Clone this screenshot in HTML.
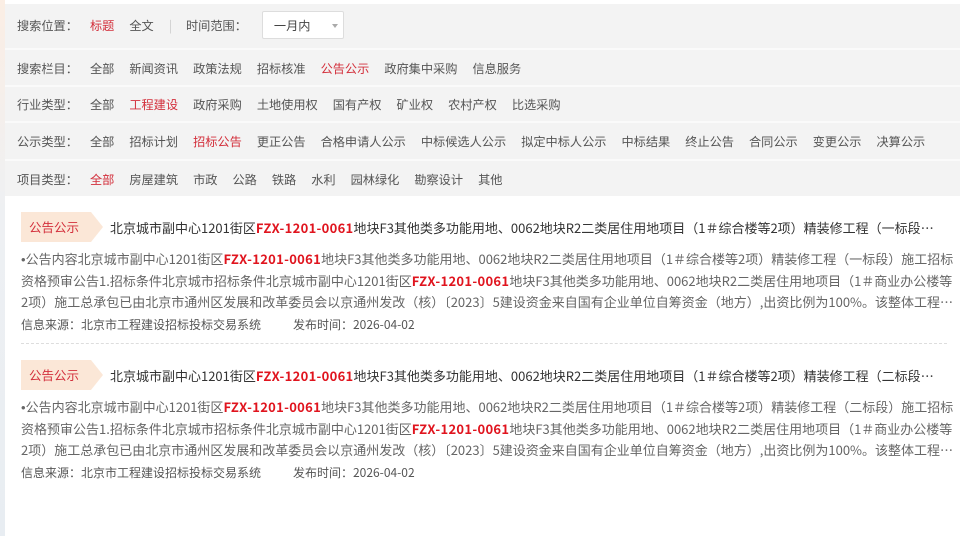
<!DOCTYPE html>
<html><head><meta charset="utf-8"><style>
*{margin:0;padding:0;box-sizing:border-box}
body{width:960px;height:536px;overflow:hidden;background:#fff;font-family:"Noto Sans CJK SC","Liberation Sans",sans-serif;position:relative}
.strip{position:absolute;left:0;top:0;width:5px;height:536px;background:linear-gradient(#fbeee4,#eef0f3 40%,#e8edf2)}
.filter{position:absolute;left:5px;top:4px;width:955px;background:#f3f3f3}
.row{position:relative;border-bottom:2px solid #fafafa;font-size:12.2px;color:#555;display:flex;align-items:center;padding-left:12px}
.row span{margin-right:15px;white-space:nowrap}
.row .lab{margin-right:12px}
.red{color:#d3303c}
.sel{width:82px;height:28px;background:#fff;border:1px solid #ddd;border-radius:2px;position:relative;padding-left:11px;line-height:26px;color:#444}
.sel:after{content:"";position:absolute;right:5px;top:12px;border:3px solid transparent;border-top:4px solid #aaa}
.item{position:absolute;left:21px;width:926px}
.tag{position:absolute;left:0;top:0;width:82px;height:30px;background:#fbe7d7;clip-path:polygon(0 0,70px 0,82px 15px,70px 30px,0 30px);color:#d3303c;font-size:12.5px;line-height:30px;padding-left:8px}
.title{position:absolute;left:89px;top:6px;width:830px;font-size:13px;color:#333;white-space:nowrap;overflow:hidden;text-overflow:ellipsis;line-height:20px}
.body{position:absolute;left:0;top:36px;width:934px;font-size:13px;color:#666;line-height:21px;height:63px;overflow:hidden;display:-webkit-box;-webkit-line-clamp:3;-webkit-box-orient:vertical}
.bu{font-family:"Liberation Sans",sans-serif}
b{color:#e0141e;font-weight:bold;letter-spacing:0.3px}
.meta{position:absolute;left:0;top:104px;font-size:12px;color:#555;white-space:nowrap;line-height:17px}
.dash{position:absolute;left:0;top:131px;width:926px;border-top:1px dashed #ddd}
</style></head><body>
<div class="strip"></div>
<div class="filter">
<div class="row" style="height:46px;padding-bottom:3px"><span class="lab">搜索位置：</span><span class="red">标题</span><span>全文</span><span style="color:#ccc;margin-right:14px">|</span><span>时间范围：</span><div class="sel">一月内</div></div>
<div class="row" style="height:37px"><span class="lab">搜索栏目：</span><span>全部</span><span>新闻资讯</span><span>政策法规</span><span>招标核准</span><span class="red">公告公示</span><span>政府集中采购</span><span>信息服务</span></div>
<div class="row" style="height:36px"><span class="lab">行业类型：</span><span>全部</span><span class="red">工程建设</span><span>政府采购</span><span>土地使用权</span><span>国有产权</span><span>矿业权</span><span>农村产权</span><span>比选采购</span></div>
<div class="row" style="height:38px"><span class="lab">公示类型：</span><span>全部</span><span>招标计划</span><span class="red">招标公告</span><span>更正公告</span><span>合格申请人公示</span><span>中标候选人公示</span><span>拟定中标人公示</span><span>中标结果</span><span>终止公告</span><span>合同公示</span><span>变更公示</span><span>决算公示</span></div>
<div class="row" style="height:35px;border-bottom:none"><span class="lab">项目类型：</span><span class="red">全部</span><span>房屋建筑</span><span>市政</span><span>公路</span><span>铁路</span><span>水利</span><span>园林绿化</span><span>勘察设计</span><span>其他</span></div>
</div>

<div class="item" style="top:212px">
<div class="tag">公告公示</div>
<div class="title">北京城市副中心1201街区<b>FZX-1201-0061</b>地块F3其他类多功能用地、0062地块R2二类居住用地项目（1＃综合楼等2项）精装修工程（一标段）施工招标资格预审公告</div>
<div class="body"><span class="bu">•</span>公告内容北京城市副中心1201街区<b>FZX-1201-0061</b>地块F3其他类多功能用地、0062地块R2二类居住用地项目（1＃综合楼等2项）精装修工程（一标段）施工招标资格预审公告1.招标条件北京城市招标条件北京城市副中心1201街区<b>FZX-1201-0061</b>地块F3其他类多功能用地、0062地块R2二类居住用地项目（1＃商业办公楼等2项）施工总承包已由北京市通州区发展和改革委员会以京通州发改（核）〔2023〕5建设资金来自国有企业单位自筹资金（地方）,出资比例为100%。该整体工程项目已具备招标条件，现对其进行公开招标。</div>
<div class="meta">信息来源：北京市工程建设招标投标交易系统<span style="margin-left:32px">发布时间：2026-04-02</span></div>
<div class="dash"></div>
</div>

<div class="item" style="top:360px">
<div class="tag">公告公示</div>
<div class="title">北京城市副中心1201街区<b>FZX-1201-0061</b>地块F3其他类多功能用地、0062地块R2二类居住用地项目（1＃综合楼等2项）精装修工程（二标段）施工招标资格预审公告</div>
<div class="body"><span class="bu">•</span>公告内容北京城市副中心1201街区<b>FZX-1201-0061</b>地块F3其他类多功能用地、0062地块R2二类居住用地项目（1＃综合楼等2项）精装修工程（二标段）施工招标资格预审公告1.招标条件北京城市招标条件北京城市副中心1201街区<b>FZX-1201-0061</b>地块F3其他类多功能用地、0062地块R2二类居住用地项目（1＃商业办公楼等2项）施工总承包已由北京市通州区发展和改革委员会以京通州发改（核）〔2023〕5建设资金来自国有企业单位自筹资金（地方）,出资比例为100%。该整体工程项目已具备招标条件，现对其进行公开招标。</div>
<div class="meta">信息来源：北京市工程建设招标投标交易系统<span style="margin-left:32px">发布时间：2026-04-02</span></div>
</div>
</body></html>
